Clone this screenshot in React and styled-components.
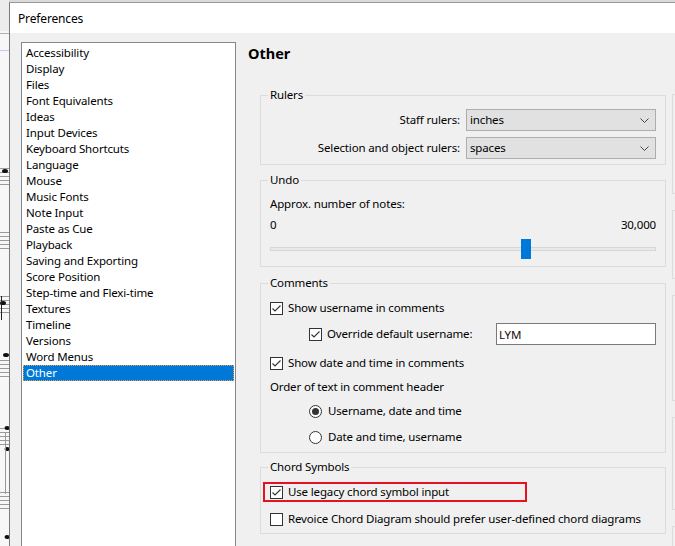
import styled, { createGlobalStyle } from 'styled-components';

const GlobalStyle = createGlobalStyle`
  html, body {
    margin: 0;
    padding: 0;
    background: #dadada;
  }
  body {
    font-family: 'Noto Sans', 'Liberation Sans', sans-serif;
    font-size: 11.5px;
    letter-spacing: -0.15px;
    color: #000;
  }
`;

const categories = [
  'Accessibility',
  'Display',
  'Files',
  'Font Equivalents',
  'Ideas',
  'Input Devices',
  'Keyboard Shortcuts',
  'Language',
  'Mouse',
  'Music Fonts',
  'Note Input',
  'Paste as Cue',
  'Playback',
  'Saving and Exporting',
  'Score Position',
  'Step-time and Flexi-time',
  'Textures',
  'Timeline',
  'Versions',
  'Word Menus',
  'Other',
];

const ghostBoxes = [98, 67, 104, 91, 60];

const undoValue = 20000;
const undoMax = 30000;

const CheckMark = () => (
  <svg width="11" height="11" viewBox="0 0 11 11">
    <path d="M1.5 5.5 L4 8 L9.5 2.5" fill="none" stroke="#333" strokeWidth="1.1" />
  </svg>
);

const Chevron = () => (
  <svg width="9" height="5" viewBox="0 0 9 5">
    <path d="M0.5 0.5 L4.5 4.5 L8.5 0.5" fill="none" stroke="#444" strokeWidth="1" />
  </svg>
);

const ScoreStrip = () => (
  <svg width="9" height="546" viewBox="0 0 9 546">
    <rect width="9" height="546" fill="#f7f7f7" />
    <rect width="9" height="31" fill="#ececec" />
    <line x1="0" y1="33.5" x2="9" y2="33.5" stroke="#b0b0b0" />
    <line x1="0" y1="50.5" x2="9" y2="50.5" stroke="#c9c9f0" />
    {[168, 232, 296, 360, 428, 492].map((y) =>
      [0, 4, 8, 12, 16].map((d) => (
        <line key={y + d} x1="0" y1={y + d + 0.5} x2="9" y2={y + d + 0.5} stroke="#9a9a9a" />
      ))
    )}
    <ellipse cx="5" cy="171" rx="3" ry="2" fill="#111" />
    <ellipse cx="3" cy="303" rx="3" ry="2" fill="#111" />
    <ellipse cx="6" cy="355" rx="3" ry="2" fill="#111" />
    <ellipse cx="7" cy="428" rx="2.5" ry="2" fill="#111" />
    <ellipse cx="7" cy="449" rx="2.5" ry="2" fill="#111" />
    <ellipse cx="7" cy="537" rx="2.5" ry="2" fill="#111" />
    <line x1="1.5" y1="296" x2="1.5" y2="320" stroke="#222" />
    <line x1="5.5" y1="432" x2="5.5" y2="494" stroke="#999" />
  </svg>
);

const App = () => {
  const thumbLeft = (undoValue / undoMax) * 376;

  return (
    <>
      <GlobalStyle />
      <Screen>
        <Backdrop>
          <ScoreStrip />
        </Backdrop>
        <Dialog>
          <TitleBar>Preferences</TitleBar>
          <Body>
            <CategoryList>
              {categories.map((name) => (
                <CategoryItem key={name} $selected={name === 'Other'}>
                  {name}
                </CategoryItem>
              ))}
            </CategoryList>

            <Page>
              <Heading>Other</Heading>
              <Columns>
                <GroupColumn>
                  <Group $pad="6px 9px 5px 9px">
                    <Legend>Rulers</Legend>
                    <FieldRow>
                      <FieldLabel>Staff rulers:</FieldLabel>
                      <Select>
                        inches
                        <Chevron />
                      </Select>
                    </FieldRow>
                    <FieldRow $mt={6}>
                      <FieldLabel>Selection and object rulers:</FieldLabel>
                      <Select>
                        spaces
                        <Chevron />
                      </Select>
                    </FieldRow>
                  </Group>

                  <Group $pad="8px 9px 7px 9px" $mt={7}>
                    <Legend>Undo</Legend>
                    <TextRow>Approx. number of notes:</TextRow>
                    <RangeLabels $mt={5}>
                      <span>0</span>
                      <span>30,000</span>
                    </RangeLabels>
                    <Slider>
                      <Track />
                      <Thumb style={{ left: thumbLeft }} />
                    </Slider>
                  </Group>

                  <Group $pad="9px 9px 7px 9px" $mt={8}>
                    <Legend>Comments</Legend>
                    <CheckRow>
                      <CheckBox>
                        <CheckMark />
                      </CheckBox>
                      Show username in comments
                    </CheckRow>
                    <CheckRow $mt={7} $indent={39} $height={22}>
                      <CheckBox>
                        <CheckMark />
                      </CheckBox>
                      Override default username:
                      <TextInput>LYM</TextInput>
                    </CheckRow>
                    <CheckRow $mt={10}>
                      <CheckBox>
                        <CheckMark />
                      </CheckBox>
                      Show date and time in comments
                    </CheckRow>
                    <TextRow $mt={8}>Order of text in comment header</TextRow>
                    <RadioRow $mt={8}>
                      <Radio $checked />
                      Username, date and time
                    </RadioRow>
                    <RadioRow $mt={10}>
                      <Radio />
                      Date and time, username
                    </RadioRow>
                  </Group>

                  <Group $pad="7px 9px 6px 9px" $mt={6}>
                    <Legend>Chord Symbols</Legend>
                    <HighlightRow>
                      <CheckBox>
                        <CheckMark />
                      </CheckBox>
                      Use legacy chord symbol input
                    </HighlightRow>
                    <CheckRow $mt={9}>
                      <CheckBox />
                      Revoice Chord Diagram should prefer user-defined chord diagrams
                    </CheckRow>
                  </Group>
                </GroupColumn>

                <GhostColumn>
                  {ghostBoxes.map((h, i) => (
                    <GhostBox key={i} $height={h} />
                  ))}
                </GhostColumn>
              </Columns>
            </Page>
          </Body>
        </Dialog>
      </Screen>
    </>
  );
};

export default App;

const Screen = styled.div`
  display: flex;
  width: 675px;
  height: 546px;
  overflow: hidden;
  background: #dadada;
`;

const Backdrop = styled.div`
  width: 9px;
  flex-shrink: 0;
  svg {
    display: block;
  }
`;

const Dialog = styled.div`
  flex: 1;
  display: flex;
  flex-direction: column;
  margin-top: 2px;
  border-top: 1px solid #9a9a9a;
  border-left: 1px solid #7a7a7a;
  background: #f0f0f0;
`;

const TitleBar = styled.div`
  height: 30px;
  line-height: 31px;
  padding-left: 8px;
  background: #fff;
  font-size: 12px;
  color: #000;
`;

const Body = styled.div`
  flex: 1;
  display: flex;
  align-items: flex-start;
  background: #f0f0f0;
`;

const CategoryList = styled.div`
  width: 215px;
  height: 520px;
  box-sizing: border-box;
  margin: 9px 0 0 11px;
  padding: 2px 1px 0;
  border: 1px solid #828790;
  background: #fff;
  flex-shrink: 0;
`;

const CategoryItem = styled.div`
  height: 16px;
  line-height: 16px;
  padding-left: 3px;
  white-space: nowrap;
  color: ${(p) => (p.$selected ? '#fff' : '#000')};
  background: ${(p) => (p.$selected ? '#0078d7' : 'transparent')};
  outline: ${(p) => (p.$selected ? '1px dotted #f0a040' : 'none')};
  outline-offset: -1px;
`;

const Page = styled.div`
  flex: 1;
  padding: 10px 0 0 12px;
`;

const Heading = styled.div`
  font-size: 14.5px;
  font-weight: 700;
  letter-spacing: 0;
  line-height: 21px;
  height: 20px;
`;

const Columns = styled.div`
  display: flex;
  gap: 6px;
  margin: 24px 0 0 12px;
`;

const GroupColumn = styled.div`
  width: 406px;
  flex-shrink: 0;
  display: flex;
  flex-direction: column;
`;

const Group = styled.fieldset`
  margin: ${(p) => p.$mt || 0}px 0 0;
  padding: ${(p) => p.$pad};
  border: 1px solid #dcdcdc;
  min-width: 0;
`;

const Legend = styled.legend`
  padding: 0 2px;
  margin-left: -2px;
  line-height: 16px;
`;

const FieldRow = styled.div`
  display: flex;
  justify-content: flex-end;
  align-items: center;
  gap: 6px;
  margin-top: ${(p) => p.$mt || 0}px;
`;

const FieldLabel = styled.span`
  line-height: 16px;
`;

const Select = styled.div`
  width: 190px;
  height: 22px;
  box-sizing: border-box;
  display: flex;
  align-items: center;
  justify-content: space-between;
  padding: 0 6px 0 3px;
  border: 1px solid #adadad;
  background: #e1e1e1;
  line-height: 16px;
`;

const TextRow = styled.div`
  line-height: 16px;
  margin-top: ${(p) => p.$mt || 0}px;
`;

const RangeLabels = styled.div`
  display: flex;
  justify-content: space-between;
  line-height: 16px;
  margin-top: ${(p) => p.$mt || 0}px;
`;

const Slider = styled.div`
  position: relative;
  height: 20px;
  margin-top: 6px;
  display: flex;
  align-items: center;
`;

const Track = styled.div`
  flex: 1;
  height: 4px;
  box-sizing: border-box;
  border: 1px solid #d6d6d6;
  background: #e7eaea;
`;

const Thumb = styled.div`
  position: absolute;
  top: 0;
  width: 10px;
  height: 20px;
  background: #0078d7;
`;

const CheckRow = styled.div`
  display: flex;
  align-items: center;
  gap: 5px;
  height: ${(p) => p.$height || 16}px;
  line-height: 16px;
  white-space: nowrap;
  margin-top: ${(p) => p.$mt || 0}px;
  padding-left: ${(p) => p.$indent || 0}px;
`;

const HighlightRow = styled(CheckRow)`
  width: 264px;
  box-sizing: border-box;
  height: 20px;
  margin-left: -7px;
  padding-left: 5px;
  border: 2px solid #e81123;
`;

const CheckBox = styled.span`
  width: 13px;
  height: 13px;
  box-sizing: border-box;
  flex-shrink: 0;
  display: flex;
  align-items: center;
  justify-content: center;
  border: 1px solid #333;
  background: #fff;
`;

const TextInput = styled.div`
  margin-left: auto;
  width: 160px;
  height: 22px;
  box-sizing: border-box;
  padding-left: 2px;
  border: 1px solid #7a7a7a;
  background: #fff;
  line-height: 21px;
  color: #1a0a0a;
`;

const RadioRow = styled.div`
  display: flex;
  align-items: center;
  gap: 6px;
  height: 16px;
  line-height: 16px;
  padding-left: 39px;
  margin-top: ${(p) => p.$mt || 0}px;
`;

const Radio = styled.span`
  width: 13px;
  height: 13px;
  box-sizing: border-box;
  flex-shrink: 0;
  border: 1px solid #333;
  border-radius: 50%;
  background: #fff;
  display: flex;
  align-items: center;
  justify-content: center;

  &::after {
    content: '';
    width: 7px;
    height: 7px;
    border-radius: 50%;
    background: ${(p) => (p.$checked ? '#333' : 'transparent')};
  }
`;

const GhostColumn = styled.div`
  flex: 1;
  display: flex;
  flex-direction: column;
  gap: 16px;
  margin-top: 7px;
`;

const GhostBox = styled.div`
  height: ${(p) => p.$height}px;
  flex-shrink: 0;
  border: 1px solid #dcdcdc;
  border-right: none;
`;
